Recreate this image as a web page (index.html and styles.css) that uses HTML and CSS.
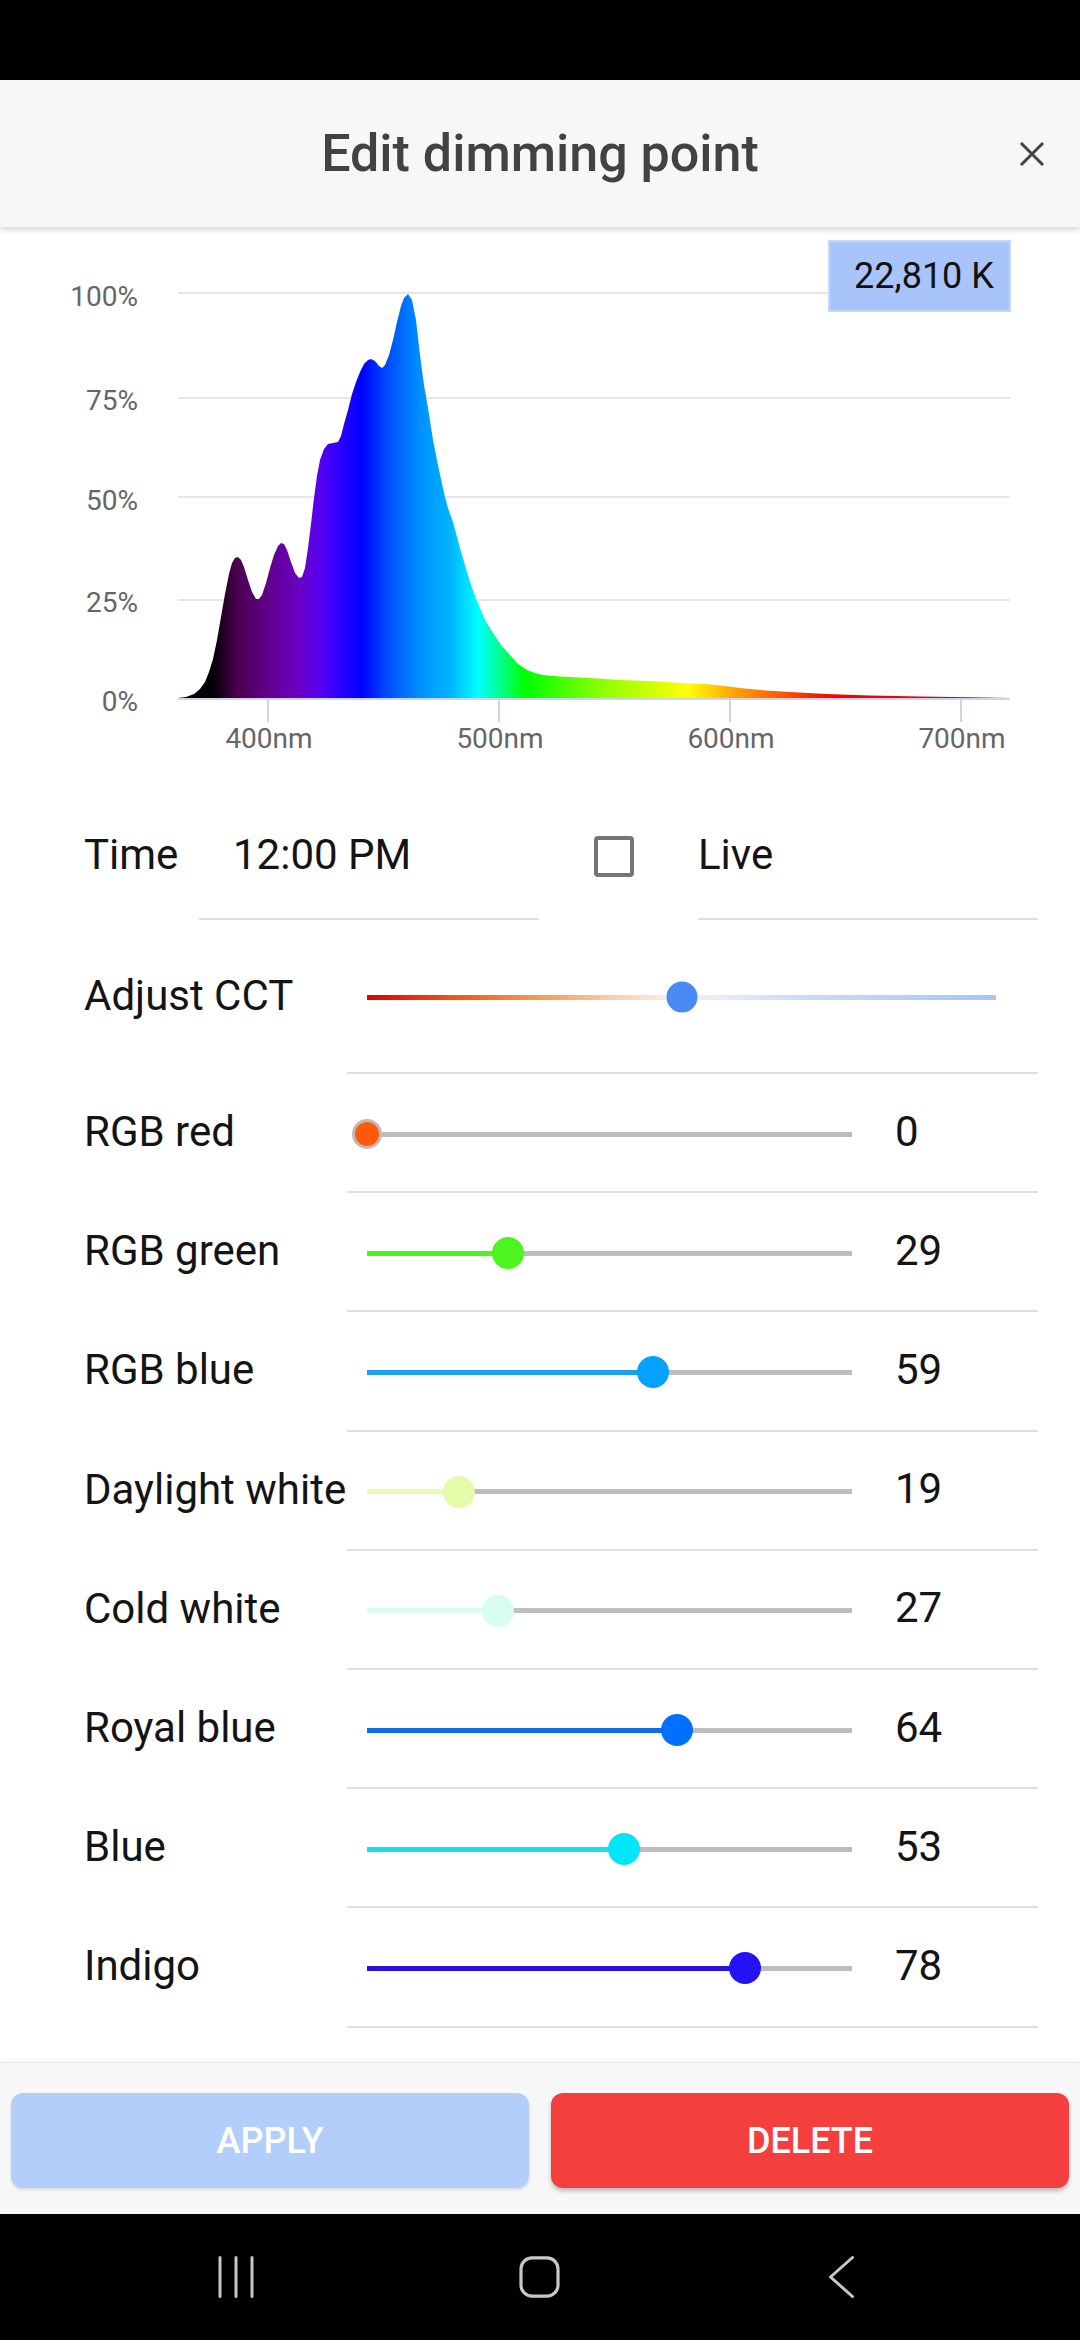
FILE: index.html
```html
<!DOCTYPE html>
<html lang="en">
<head>
<meta charset="utf-8">
<title>Edit dimming point</title>
<link rel="stylesheet" href="styles.css">
</head>
<body>
<div class="screen">
  <div class="statusbar"></div>

  <header class="appbar">
    <div class="spacer"></div>
    <h1 class="title">Edit dimming point</h1>
    <button class="close" aria-label="Close">
      <svg width="26" height="26" viewBox="0 0 26 26"><path d="M2 2 L24 24 M24 2 L2 24" stroke="#444" stroke-width="3" fill="none"/></svg>
    </button>
  </header>

  <main class="content">
    <svg class="chart" width="1080" height="553" viewBox="0 227 1080 553">
      <defs>
        <linearGradient id="spec" gradientUnits="userSpaceOnUse" x1="178" y1="0" x2="1010" y2="0">
          <stop offset="0" stop-color="#000000"/>
          <stop offset="0.041" stop-color="#000000"/>
          <stop offset="0.071" stop-color="#4b0050"/>
          <stop offset="0.111" stop-color="#620090"/>
          <stop offset="0.147" stop-color="#6a00c8"/>
          <stop offset="0.171" stop-color="#5500f0"/>
          <stop offset="0.195" stop-color="#2a00ff"/>
          <stop offset="0.221" stop-color="#0000ff"/>
          <stop offset="0.249" stop-color="#0048ff"/>
          <stop offset="0.291" stop-color="#0090ff"/>
          <stop offset="0.327" stop-color="#00b4ff"/>
          <stop offset="0.361" stop-color="#00ffff"/>
          <stop offset="0.387" stop-color="#00ff90"/>
          <stop offset="0.417" stop-color="#00ff00"/>
          <stop offset="0.512" stop-color="#90ff00"/>
          <stop offset="0.613" stop-color="#ffff00"/>
          <stop offset="0.670" stop-color="#ffa000"/>
          <stop offset="0.724" stop-color="#ff5a00"/>
          <stop offset="0.784" stop-color="#ff0000"/>
          <stop offset="0.940" stop-color="#e00000"/>
          <stop offset="1" stop-color="#b00000"/>
        </linearGradient>
      </defs>
      <g class="grid">
        <line x1="178" x2="1010" y1="293" y2="293"/>
        <line x1="178" x2="1010" y1="398" y2="398"/>
        <line x1="178" x2="1010" y1="497" y2="497"/>
        <line x1="178" x2="1010" y1="600" y2="600"/>
      </g>
      <path fill="url(#spec)" d="M178,698 L186,697 L194,694 L200,689 L205,682 L209,672 L213,659 L217,640 L221,617 L225,594 L229,574 L232,563 L235,558 L238,557 L241,560 L244,567 L248,580 L252,592 L256,599 L259,599 L262,595 L266,583 L270,568 L274,555 L278,546 L281,543 L284,544 L287,550 L291,562 L295,573 L299,578 L302,577 L305,568 L308,548 L311,524 L314,498 L317,476 L320,460 L324,449 L328,444 L333,443 L338,442 L341,436 L344,424 L348,410 L352,394 L356,382 L360,372 L364,364 L368,360 L371,359 L375,361 L379,366 L382,368 L385,365 L389,355 L393,340 L397,322 L401,306 L404,298 L408,294 L412,300 L416,320 L420,355 L424,385 L428,408 L433,440 L438,465 L444,493 L448,508 L453,522 L460,548 L467,572 L472,588 L477,601 L485,620 L493,633 L501,645 L510,655 L518,664 L527,670 L535,673 L543,675 L560,676.5 L590,678 L620,680 L650,681 L680,683 L705,684 L725,686 L740,688 L760,690 L790,692 L826,694 L870,695.5 L920,696.5 L970,697.3 L1010,698 Z"/>
      <g class="axis">
        <line x1="178" x2="1010" y1="699" y2="699"/>
        <line x1="268" x2="268" y1="699" y2="722"/>
        <line x1="499" x2="499" y1="699" y2="722"/>
        <line x1="730" x2="730" y1="699" y2="722"/>
        <line x1="961" x2="961" y1="699" y2="722"/>
      </g>
      <g class="ylab">
        <text x="138" y="306">100%</text>
        <text x="138" y="410">75%</text>
        <text x="138" y="510">50%</text>
        <text x="138" y="612">25%</text>
        <text x="138" y="711">0%</text>
      </g>
      <g class="xlab">
        <text x="269" y="748">400nm</text>
        <text x="500" y="748">500nm</text>
        <text x="731" y="748">600nm</text>
        <text x="962" y="748">700nm</text>
      </g>
      <rect class="kbox" x="829" y="241" width="181" height="70"/>
      <text class="ktext" x="924" y="288">22,810 K</text>
    </svg>

    <div class="time-row">
      <span class="tlabel">Time</span>
      <div class="field field-time">12:00 PM</div>
      <span class="checkbox"></span>
      <div class="field field-live">Live</div>
    </div>

    <div class="row cct-row">
      <span class="label">Adjust CCT</span>
      <div class="control">
        <div class="slider cct" style="--v:50%"><span class="thumb"></span></div>
      </div>
    </div>

    <div class="row">
      <span class="label">RGB red</span>
      <div class="control">
        <div class="slider red" style="--v:0%"><span class="fill"></span><span class="thumb"></span></div>
        <span class="value">0</span>
      </div>
    </div>
    <div class="row">
      <span class="label">RGB green</span>
      <div class="control">
        <div class="slider green" style="--v:29%"><span class="fill"></span><span class="thumb"></span></div>
        <span class="value">29</span>
      </div>
    </div>
    <div class="row">
      <span class="label">RGB blue</span>
      <div class="control">
        <div class="slider rgbblue" style="--v:59%"><span class="fill"></span><span class="thumb"></span></div>
        <span class="value">59</span>
      </div>
    </div>
    <div class="row">
      <span class="label">Daylight white</span>
      <div class="control">
        <div class="slider daylight" style="--v:19%"><span class="fill"></span><span class="thumb"></span></div>
        <span class="value">19</span>
      </div>
    </div>
    <div class="row">
      <span class="label">Cold white</span>
      <div class="control">
        <div class="slider cold" style="--v:27%"><span class="fill"></span><span class="thumb"></span></div>
        <span class="value">27</span>
      </div>
    </div>
    <div class="row">
      <span class="label">Royal blue</span>
      <div class="control">
        <div class="slider royal" style="--v:64%"><span class="fill"></span><span class="thumb"></span></div>
        <span class="value">64</span>
      </div>
    </div>
    <div class="row">
      <span class="label">Blue</span>
      <div class="control">
        <div class="slider blue" style="--v:53%"><span class="fill"></span><span class="thumb"></span></div>
        <span class="value">53</span>
      </div>
    </div>
    <div class="row">
      <span class="label">Indigo</span>
      <div class="control">
        <div class="slider indigo" style="--v:78%"><span class="fill"></span><span class="thumb"></span></div>
        <span class="value">78</span>
      </div>
    </div>
  </main>

  <footer class="actions">
    <button class="btn apply">APPLY</button>
    <button class="btn delete">DELETE</button>
  </footer>

  <nav class="navbar">
    <svg class="navicon" width="60" height="42" viewBox="0 0 60 42">
      <path d="M14 1.5 V40.5 M30 1.5 V40.5 M46 1.5 V40.5" stroke="#c8c8c8" stroke-width="3" stroke-linecap="round" fill="none"/>
    </svg>
    <svg class="navicon" width="60" height="42" viewBox="0 0 60 42">
      <rect x="12" y="1.8" width="37" height="38.4" rx="11" stroke="#c8c8c8" stroke-width="3.2" fill="none"/>
    </svg>
    <svg class="navicon" width="60" height="42" viewBox="0 0 60 42">
      <path d="M40.5 1.5 L18.5 21 L40.5 40.5" stroke="#c8c8c8" stroke-width="3" stroke-linecap="round" stroke-linejoin="round" fill="none"/>
    </svg>
  </nav>
</div>
</body>
</html>
```

FILE: styles.css
```css
* {
  box-sizing: border-box;
  margin: 0;
  padding: 0;
}

html,
body {
  width: 1080px;
  height: 2340px;
  overflow: hidden;
  background: #000;
}

body {
  font-family: Roboto, "Noto Sans", "Liberation Sans", sans-serif;
  color: #141414;
}

.screen {
  display: flex;
  flex-direction: column;
  width: 1080px;
  height: 2340px;
}

.statusbar {
  flex: none;
  height: 80px;
  background: #000;
}

/* App bar */
.appbar {
  flex: none;
  height: 147px;
  background: #f7f7f7;
  display: grid;
  grid-template-columns: 1fr auto 1fr;
  align-items: center;
  box-shadow: 0 3px 6px rgba(0, 0, 0, 0.16);
  position: relative;
  z-index: 2;
}

.title {
  font-size: 52px;
  font-weight: 500;
  color: #424242;
}

.close {
  justify-self: end;
  margin-right: 35px;
  width: 26px;
  height: 26px;
  border: 0;
  background: none;
  display: flex;
}

/* Content */
.content {
  flex: none;
  height: 1835px;
  background: #fff;
  display: flex;
  flex-direction: column;
}

.chart {
  display: block;
  flex: none;
}

.grid line {
  stroke: #e6e6e6;
  stroke-width: 2;
}

.axis line {
  stroke: #ccd6eb;
  stroke-width: 2;
}

.ylab text,
.xlab text {
  font-family: Roboto, "Noto Sans", sans-serif;
  font-size: 28px;
  fill: #666;
}

.ylab text {
  text-anchor: end;
}

.xlab text {
  text-anchor: middle;
}

.kbox {
  fill: #a8c4fb;
  stroke: #cbd7ee;
  stroke-width: 2;
}

.ktext {
  font-family: Roboto, "Noto Sans", sans-serif;
  font-size: 36px;
  fill: #111;
  text-anchor: middle;
}

/* Time row */
.time-row {
  flex: none;
  height: 140px;
  display: flex;
  padding-left: 84px;
}

.tlabel {
  width: 115px;
  padding-top: 50px;
  font-size: 42px;
  line-height: 49px;
}

.field {
  width: 340px;
  border-bottom: 2px solid #dedede;
  padding-top: 50px;
  font-size: 42px;
  line-height: 49px;
}

.field-time {
  padding-left: 34px;
}

.checkbox {
  flex: none;
  width: 40px;
  height: 41px;
  border: 4px solid #757575;
  border-radius: 4px;
  margin: 56px 64px 0 55px;
}

/* Slider rows */
.row {
  flex: none;
  display: flex;
  height: 119.2px;
  padding: 0 42px 0 84px;
}

.cct-row {
  height: 154px;
}

.label {
  width: 263px;
  flex: none;
  align-self: center;
  margin-bottom: 4px;
  font-size: 42px;
  line-height: 49px;
  white-space: nowrap;
}

.control {
  flex: 1;
  display: flex;
  align-items: center;
  padding-left: 20px;
  border-bottom: 2px solid #dedede;
}

.value {
  margin-left: 43px;
  margin-bottom: 3px;
  font-size: 42px;
  line-height: 49px;
}

.slider {
  position: relative;
  flex: none;
  width: 485px;
  height: 5px;
  margin-top: 3px;
  background: #bdbdbd;
}

.slider .fill {
  position: absolute;
  left: 0;
  top: 0;
  height: 100%;
  width: var(--v);
}

.slider .thumb {
  position: absolute;
  top: 50%;
  left: var(--v);
  width: 32px;
  height: 32px;
  border-radius: 50%;
  transform: translate(-50%, -50%);
}

.slider.cct {
  width: 629px;
  margin-top: 2px;
  background: linear-gradient(90deg, #e00000 0%, #ea5a18 14%, #f39a50 27%, #f8d2b4 40%, #fbeee6 48%, #e6ecfa 56%, #c9daf8 70%, #a8c4f6 100%);
}

.slider.cct .thumb {
  width: 31px;
  height: 31px;
  background: #4a8af4;
}

.slider.red .thumb {
  width: 30px;
  height: 30px;
  background: #ff5a0a;
  border: 3px solid #c4bab5;
}

.green .fill,
.green .thumb {
  background: #4cf51f;
}

.rgbblue .fill {
  background: #1aa0ec;
}

.rgbblue .thumb {
  background: #03a2ff;
}

.daylight .fill {
  background: #e6fcb4;
}

.daylight .thumb {
  background: #e4fcaa;
}

.cold .fill {
  background: #defcf2;
}

.cold .thumb {
  background: #d8fcef;
}

.royal .fill {
  background: #0d6ee8;
}

.royal .thumb {
  background: #0070ff;
}

.blue .fill {
  background: #14e0f0;
}

.blue .thumb {
  background: #00e5f8;
}

.indigo .fill {
  background: #2514e0;
}

.indigo .thumb {
  background: #2414f5;
}

/* Footer actions */
.actions {
  flex: none;
  height: 152px;
  background: #f7f7f7;
  border-top: 1px solid #e6e6e6;
  box-shadow: 0 -2px 4px rgba(0, 0, 0, 0.04);
  display: flex;
  gap: 22px;
  padding: 30px 11px 0;
}

.btn {
  flex: 1;
  height: 95px;
  border: 0;
  border-radius: 12px;
  font-family: Roboto, "Noto Sans", sans-serif;
  font-weight: 500;
  font-size: 36px;
  color: #fff;
}

.apply {
  background: #b3cefa;
  box-shadow: 0 2px 3px rgba(0, 0, 0, 0.12);
}

.delete {
  background: #f43f3f;
  box-shadow: 0 3px 4px rgba(0, 0, 0, 0.25);
}

/* Navigation bar */
.navbar {
  flex: none;
  height: 126px;
  background: #000;
  display: flex;
  align-items: center;
  gap: 243px;
  padding-left: 206px;
}

.navicon {
  display: block;
  flex: none;
}
```
